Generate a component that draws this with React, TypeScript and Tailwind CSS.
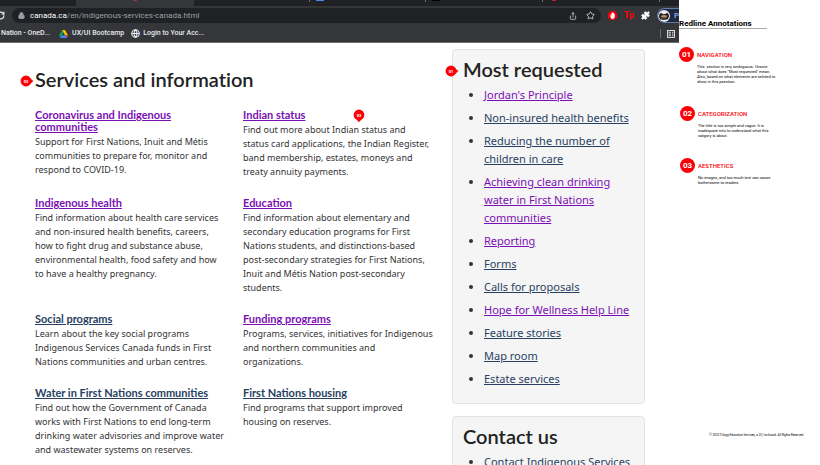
import { Lock, RotateCw, Share, Star, Puzzle, Globe } from "lucide-react";

const services = [
  {
    title: "Coronavirus and Indigenous communities",
    text: "Support for First Nations, Inuit and Métis communities to prepare for, monitor and respond to COVID-19.",
    visited: true,
  },
  {
    title: "Indian status",
    text: "Find out more about Indian status and status\u00a0card applications, the Indian Register, band membership, estates, moneys and treaty annuity payments.",
    visited: true,
    pin: "03",
  },
  {
    title: "Indigenous health",
    text: "Find information about health care services and non-insured health benefits, careers, how to fight drug and substance abuse, environmental health, food safety and how to have a healthy pregnancy.",
    visited: true,
  },
  {
    title: "Education",
    text: "Find information about elementary and secondary education programs for First Nations students, and distinctions-based post-secondary strategies for First Nations, Inuit and Métis Nation post-secondary students.",
    visited: true,
  },
  {
    title: "Social programs",
    text: "Learn about the key social programs Indigenous Services Canada funds in First Nations communities and urban centres.",
    visited: false,
  },
  {
    title: "Funding programs",
    text: "Programs, services, initiatives for Indigenous and northern communities and organizations.",
    visited: true,
  },
  {
    title: "Water in First Nations communities",
    text: "Find out how the Government of Canada works with First Nations to end long-term drinking water advisories and improve water and wastewater systems on reserves.",
    visited: false,
  },
  {
    title: "First Nations housing",
    text: "Find programs that support improved housing on reserves.",
    visited: false,
  },
];

const requested = [
  { label: "Jordan's Principle", visited: true },
  { label: "Non-insured health benefits", visited: false },
  { label: "Reducing the number of children in care", visited: false },
  { label: "Achieving clean drinking water in First Nations communities", visited: true },
  { label: "Reporting", visited: true },
  { label: "Forms", visited: false },
  { label: "Calls for proposals", visited: false },
  { label: "Hope for Wellness Help Line", visited: true },
  { label: "Feature stories", visited: false },
  { label: "Map room", visited: false },
  { label: "Estate services", visited: false },
];

const notes = [
  {
    num: "01",
    title: "NAVIGATION",
    lines: [
      "This  section is very ambiguous. Unsure",
      "about what does \"Most requested\" mean.",
      "Also, based on what elements are selcted to",
      "show in this psection.",
    ],
    box: "mt-[18px]",
  },
  {
    num: "02",
    title: "CATEGORIZATION",
    lines: [
      "The title is too simple and vague. It is",
      "inadequate info to understand what this",
      "catgory is about.",
    ],
    box: "mt-[22px] pl-px",
  },
  {
    num: "03",
    title: "AESTHETICS",
    lines: ["No images, and too much text can cause", "bothersome to readers"],
    box: "mt-5 pl-px",
  },
];

// Red marker, the tip points right or down
function Pin({ num, down = false }: { num: string; down?: boolean }) {
  return (
    <svg width="14" height="14" viewBox="0 0 14 14" aria-hidden="true">
      <path
        d="M13.4 7C12 7.8 11 9.3 9.8 10.8A5.4 5.4 0 1 1 9.8 3.2C11 4.7 12 6.2 13.4 7Z"
        fill="#fb0007"
        transform={down ? "rotate(90 7 7)" : undefined}
      />
      <text
        x={down ? 7 : 6}
        y={down ? 7.5 : 8.5}
        textAnchor="middle"
        fontSize="4"
        fontWeight="700"
        fill="#fff"
        fontFamily="Roboto, sans-serif"
      >
        {num}
      </text>
    </svg>
  );
}

function DriveIcon() {
  return (
    <svg width="9" height="8" viewBox="0 0 18 16" aria-hidden="true">
      <path d="M6 0h6l6 10.5h-6z" fill="#fbbc04" />
      <path d="M6 0l3 5.3L3 16 0 10.5z" fill="#0f9d58" />
      <path d="M6 10.5h12L15 16H3z" fill="#4285f4" />
      <path d="M12.5 10.5H18L15 16z" fill="#ea4335" />
    </svg>
  );
}

function BrowserBar() {
  return (
    <header className="bg-[#35363a] font-[Roboto,sans-serif] text-[#e8eaed]">
      <div className="flex h-[6px] bg-[#202124]">
        <div className="h-full w-[76px]" />
        <div className="flex h-full w-[118px] items-start justify-center bg-[#35363a]">
          <span className="h-px w-1 bg-[#8a3a3d]" />
        </div>
        <div className="flex h-full flex-1 items-start pl-[115px]">
          <span className="h-[2px] w-px bg-[#6b6c70]" />
          <span className="ml-[6px] h-px w-2 bg-[#4c86f9]" />
          <span className="ml-[101px] h-[2px] w-px bg-[#6b6c70]" />
          <span className="ml-[6px] h-px w-2 bg-black" />
          <span className="ml-[102px] h-[2px] w-px bg-[#6b6c70]" />
          <span className="ml-[9px] h-px w-1 bg-[#b3262b]" />
          <span className="ml-[103px] h-[2px] w-px bg-[#6b6c70]" />
        </div>
      </div>
      <div className="flex h-[19px] items-center gap-[7px] overflow-hidden">
        <button aria-label="Reload" className="-ml-1 w-[9px] shrink-0">
          <RotateCw size={9} strokeWidth={3} />
        </button>
        <div className="flex h-[15px] flex-1 items-center rounded-full bg-[#202124] px-[6px]">
          <Lock size={7} strokeWidth={3} className="fill-[#9aa0a6] text-[#9aa0a6]" />
          <p className="ml-[5px] flex-1 text-[8px] leading-[15px] text-[#9aa0a6]">
            <span className="text-white">canada.ca</span>/en/indigenous-services-canada.html
          </p>
          <button aria-label="Share">
            <Share size={8} strokeWidth={2} />
          </button>
          <button aria-label="Bookmark this page" className="ml-[9px]">
            <Star size={9} strokeWidth={2} />
          </button>
        </div>
        <button aria-label="Ad blocker">
          <svg width="9" height="9" viewBox="0 0 18 18">
            <path d="M5.5 0h7L18 5.5v7L12.5 18h-7L0 12.5v-7z" fill="#fb0007" />
            <path d="M5 7v5q0 4 4 4t4.5-5V6h-1.5v3V4H10.500v5V3H8.500v6V4H7v5H6.500V7z" fill="#fff" />
          </svg>
        </button>
        <button className="text-[9px] leading-none font-bold text-[#fb0007]">Tp</button>
        <button aria-label="Extensions">
          <Puzzle size={9} className="fill-white text-white" />
        </button>
        <button className="flex h-[15px] w-[22px] shrink-0 items-center gap-1 overflow-hidden rounded-l-full border border-r-0 border-[#5d7bb0] bg-[#202a3d] text-[8px] font-medium text-[#8ab4f8]">
          <svg width="12" height="12" viewBox="0 0 24 24" className="shrink-0">
            <circle cx="12" cy="12" r="12" fill="#e8eaed" />
            <path d="M2 14Q2 5 7 6l2 2h6l2-2q5-1 5 8l-3 5H5z" fill="#2c2422" />
            <path d="M6 12q6-4 12 0l-1 3H7z" fill="#b98f70" />
            <path d="M6 17h12l-3 3H9z" fill="#4a4a4e" />
          </svg>
          P
        </button>
      </div>
      <nav className="flex h-[18px] items-center border-b border-[#6d6e71] text-[7px] leading-none font-medium">
        <a href="#onedrive" className="ml-px">Nation - OneD...</a>
        <a href="#bootcamp" className="ml-[9px] flex items-center gap-1">
          <DriveIcon />
          UX/UI Bootcamp
        </a>
        <a href="#login" className="ml-[7px] flex items-center gap-[3px]">
          <Globe size={9} strokeWidth={3} />
          Login to Your Acc...
        </a>
        <span className="ml-auto h-[9px] w-px bg-[#6d6e71]" />
        <button aria-label="Reading list" className="mr-1 ml-[6px]">
          <svg width="8" height="8" viewBox="0 0 16 16" fill="none" stroke="#e8eaed" strokeWidth="1.8">
            <rect x="1" y="1" width="14" height="14" />
            <path d="M3 4.5h5M3 8h5M3 11.5h5M10 4.5h3M10 8h3M10 11.5h3" />
          </svg>
        </button>
      </nav>
    </header>
  );
}

export default function App() {
  return (
    <div className="flex h-screen overflow-hidden bg-white text-[#333]">
      <div className="min-w-0 flex-1">
        <BrowserBar />
        <main className="flex gap-[17px] pr-[34px] pl-[35px] pt-[6px] font-['Noto_Sans',sans-serif]">
          <section className="flex-1 pt-[18px]">
            <h2 className="relative font-[Lato,sans-serif] text-[20px] leading-6 font-semibold text-[#222] [font-variant-ligatures:none]">
              <span className="absolute top-[7px] -left-[15px]">
                <Pin num="02" />
              </span>
              Services and information
            </h2>
            <div className="mt-[18px] grid grid-cols-2 gap-x-4 gap-y-[18px]">
              {services.map((s) => (
                <article key={s.title} className="relative">
                  <h3 className="mb-[2px] font-[Lato,sans-serif] text-[11px] leading-3 font-bold">
                    <a
                      href="#service"
                      className={s.visited ? "text-[#7a10b4] underline" : "text-[#284162] underline"}
                    >
                      {s.title}
                    </a>
                  </h3>
                  <p className="text-[9px] leading-[14px]">{s.text}</p>
                  {s.pin && (
                    <span className="absolute top-0 left-[109px]">
                      <Pin num={s.pin} down />
                    </span>
                  )}
                </article>
              ))}
            </div>
          </section>
          <div className="flex w-[193px] shrink-0 flex-col gap-3">
            <section className="rounded-sm border border-[#e3e3e3] bg-[#f5f5f5] px-[10px] pt-[7px] pb-[15px]">
              <h2 className="relative font-[Lato,sans-serif] text-[20px] leading-6 font-semibold text-[#222]">
                <span className="absolute top-[7px] -left-[18px]">
                  <Pin num="01" />
                </span>
                Most requested
              </h2>
              <ul className="mt-[5px] flex list-disc flex-col gap-[5px] pl-[21px] text-[11px] leading-[18px]">
                {requested.map((r) => (
                  <li key={r.label}>
                    <a
                      href="#requested"
                      className={r.visited ? "text-[#7a10b4] underline" : "text-[#284162] underline"}
                    >
                      {r.label}
                    </a>
                  </li>
                ))}
              </ul>
            </section>
            <section className="rounded-sm border border-[#e3e3e3] bg-[#f5f5f5] px-[10px] pt-[7px] pb-[15px]">
              <h2 className="font-[Lato,sans-serif] text-[20px] leading-6 font-semibold text-[#222]">
                Contact us
              </h2>
              <ul className="mt-[5px] list-disc pl-[21px] text-[11px] leading-[18px]">
                <li>
                  <a href="#contact" className="text-[#284162] underline">
                    Contact Indigenous Services Canada
                  </a>
                </li>
              </ul>
            </section>
          </div>
        </main>
      </div>

      <aside className="flex w-[141px] shrink-0 flex-col pt-[19px] pb-[27px] font-[Roboto,sans-serif] text-black">
        <h1 className="w-[88px] border-b border-[#aaa] text-[8px] leading-[9px] font-bold">
          Redline Annotations
        </h1>
        {notes.map((n) => (
          <section key={n.num} className={n.box}>
            <h2 className="flex items-center gap-[3px] text-[6px] leading-none font-medium text-[#fb0007]">
              <span className="flex size-[15px] items-center justify-center rounded-full bg-[#fb0007] text-[8px] font-bold text-white">
                {n.num}
              </span>
              {n.title}
            </h2>
            <p className="mt-[2px] pl-[18px] text-[4px] leading-[5px] whitespace-pre">
              {n.lines.join("\n")}
            </p>
          </section>
        ))}
        <footer className="mt-auto pr-4 text-right text-[3px] leading-[6px] whitespace-nowrap">
          © 2020 Trilogy Education Services, a 2U, Inc brand. All Rights Reserved.
        </footer>
      </aside>
    </div>
  );
}
